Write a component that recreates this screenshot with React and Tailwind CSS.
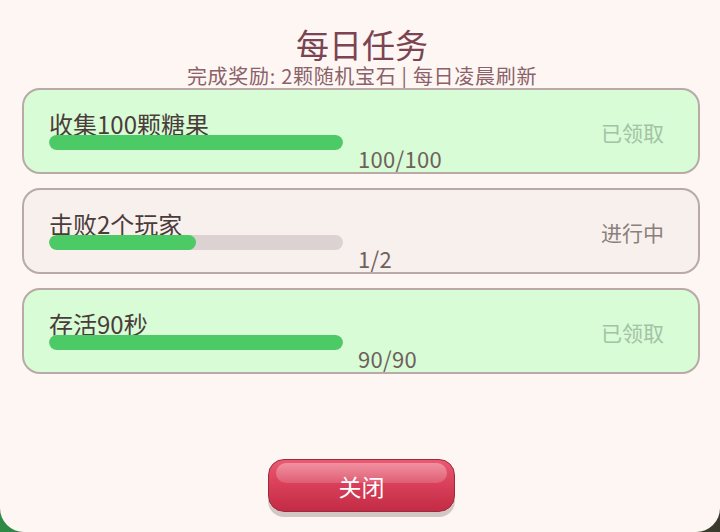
import React from "react";

const tasks = [
  { title: "收集100颗糖果", cur: 100, max: 100, status: "已领取", done: true },
  { title: "击败2个玩家", cur: 1, max: 2, status: "进行中", done: false },
  { title: "存活90秒", cur: 90, max: 90, status: "已领取", done: true },
];

function TaskCard({ t }) {
  const pct = (t.cur / t.max) * 100;
  return (
    <div
      className={`h-[86px] w-full rounded-[18px] border-[2.5px] border-[#b9aaa8] flex items-start justify-between pl-[25px] pr-[34px] pt-[22px] ${
        t.done ? "bg-[#d7fcd6]" : "bg-[#f8f0ed]"
      }`}
    >
      <div className="flex items-start">
        <div className="flex flex-col w-[294px]">
          <span className="text-[24px] leading-none text-[#4b3c3b] h-[23px] whitespace-nowrap">{t.title}</span>
          <div className="h-[15px] w-full rounded-full bg-[#dcd2d1] overflow-hidden">
            <div className="h-full rounded-full bg-[#4bca66]" style={{ width: `${pct}%` }} />
          </div>
        </div>
        <span className="ml-[15px] mt-[35px] text-[22px] leading-none text-[#6f605c] tracking-[0.3px]">
          {t.cur}/{t.max}
        </span>
      </div>
      <span
        className={`mt-[10px] text-[21px] leading-none ${
          t.done ? "text-[#a4c2a4]" : "text-[#8b7f7c]"
        }`}
      >
        {t.status}
      </span>
    </div>
  );
}

export default function App() {
  return (
    <div
      className="w-[720px] h-[532px] overflow-hidden bg-[linear-gradient(90deg,#2e8a46,#3a3a2c)]"
      style={{ fontFamily: '"Noto Sans CJK SC", "Noto Sans", sans-serif' }}
    >
      <div className="w-full h-full bg-[#fdf6f2] rounded-b-[24px] flex flex-col items-center">
        <div className="mt-[28px] text-[33px] leading-none text-[#7c4452] ml-[4px]">每日任务</div>
        <div className="mt-[5px] text-[20px] leading-none text-[#8b616a] ml-[4px] tracking-[0.7px]">
          完成奖励: 2颗随机宝石 | 每日凌晨刷新
        </div>
        <div className="mt-[2px] w-full pl-[22px] pr-[20px] flex flex-col gap-[14px]">
          {tasks.map((t, i) => (
            <TaskCard key={i} t={t} />
          ))}
        </div>
        <button className="relative mt-[85px] ml-[3px] w-[187px] h-[53px] rounded-[16px] border-[1.5px] border-[#9c2a3c] bg-[linear-gradient(180deg,#ea5a72_0%,#d83e58_50%,#c32c46_100%)] shadow-[0_5px_0_#d2c7c2] flex items-center justify-center">
          <span className="absolute left-[7px] right-[7px] top-[3px] h-[20px] rounded-[12px] bg-[linear-gradient(180deg,rgba(255,255,255,0.35),rgba(255,255,255,0.15))]" />
          <span className="relative text-[23px] leading-none text-white mt-[2px]">关闭</span>
        </button>
      </div>
    </div>
  );
}
